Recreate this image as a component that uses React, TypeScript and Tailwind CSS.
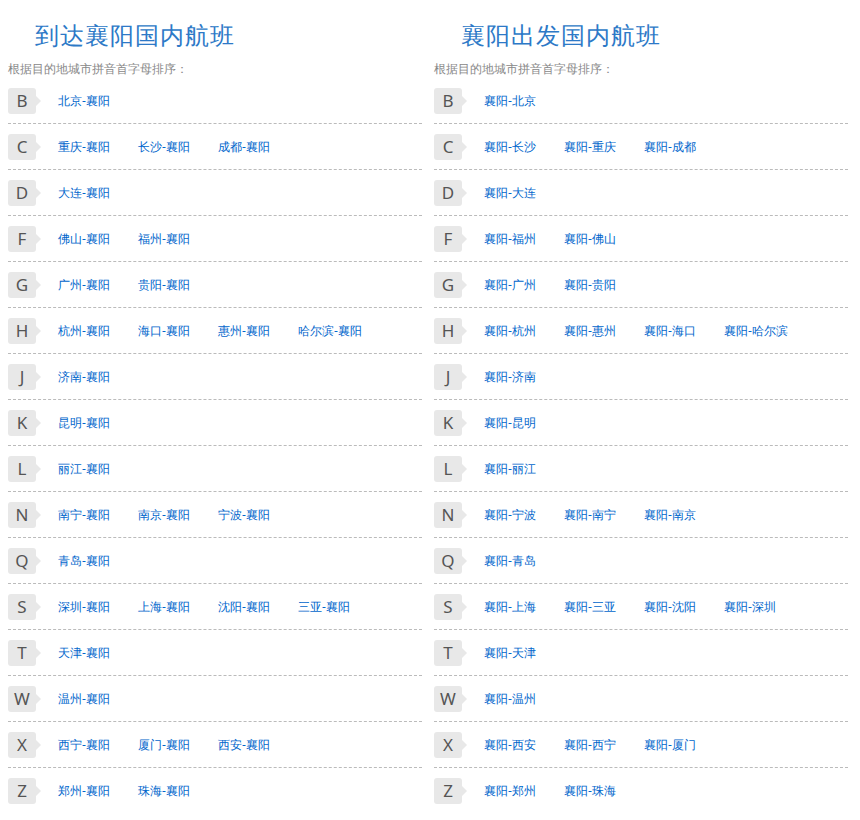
const arrive: [string, string[]][] = [
  ["B", ["北京-襄阳"]],
  ["C", ["重庆-襄阳", "长沙-襄阳", "成都-襄阳"]],
  ["D", ["大连-襄阳"]],
  ["F", ["佛山-襄阳", "福州-襄阳"]],
  ["G", ["广州-襄阳", "贵阳-襄阳"]],
  ["H", ["杭州-襄阳", "海口-襄阳", "惠州-襄阳", "哈尔滨-襄阳"]],
  ["J", ["济南-襄阳"]],
  ["K", ["昆明-襄阳"]],
  ["L", ["丽江-襄阳"]],
  ["N", ["南宁-襄阳", "南京-襄阳", "宁波-襄阳"]],
  ["Q", ["青岛-襄阳"]],
  ["S", ["深圳-襄阳", "上海-襄阳", "沈阳-襄阳", "三亚-襄阳"]],
  ["T", ["天津-襄阳"]],
  ["W", ["温州-襄阳"]],
  ["X", ["西宁-襄阳", "厦门-襄阳", "西安-襄阳"]],
  ["Z", ["郑州-襄阳", "珠海-襄阳"]],
];

const depart: [string, string[]][] = [
  ["B", ["襄阳-北京"]],
  ["C", ["襄阳-长沙", "襄阳-重庆", "襄阳-成都"]],
  ["D", ["襄阳-大连"]],
  ["F", ["襄阳-福州", "襄阳-佛山"]],
  ["G", ["襄阳-广州", "襄阳-贵阳"]],
  ["H", ["襄阳-杭州", "襄阳-惠州", "襄阳-海口", "襄阳-哈尔滨"]],
  ["J", ["襄阳-济南"]],
  ["K", ["襄阳-昆明"]],
  ["L", ["襄阳-丽江"]],
  ["N", ["襄阳-宁波", "襄阳-南宁", "襄阳-南京"]],
  ["Q", ["襄阳-青岛"]],
  ["S", ["襄阳-上海", "襄阳-三亚", "襄阳-沈阳", "襄阳-深圳"]],
  ["T", ["襄阳-天津"]],
  ["W", ["襄阳-温州"]],
  ["X", ["襄阳-西安", "襄阳-西宁", "襄阳-厦门"]],
  ["Z", ["襄阳-郑州", "襄阳-珠海"]],
];

function Badge({ letter }: { letter: string }) {
  return (
    <div className="relative w-[28px] h-[26px] shrink-0">
      <div className="w-full h-full rounded-[3px] bg-[#e8e8e8] flex items-center justify-center text-[17px] text-[#555] font-['Open_Sans',sans-serif]">
        {letter}
      </div>
      <div className="absolute right-[-5px] top-[8px] w-0 h-0 border-y-[5px] border-y-transparent border-l-[5px] border-l-[#e8e8e8]" />
    </div>
  );
}

function Section({ title, data }: { title: string; data: [string, string[]][] }) {
  return (
    <div className="w-[414px]">
      <h2 className="pl-[27px] pt-[17px] h-[62px] text-[24px] leading-[36px] text-[#2d79c7] tracking-[1px]">{title}</h2>
      <div className="text-[12px] text-[#888] leading-[14px]">根据目的地城市拼音首字母排序：</div>
      <div className="mt-[2px]">
        {data.map(([l, items], i) => (
          <div
            key={l}
            className={`flex items-center h-[46px] ${i < data.length - 1 ? "border-b border-dashed border-[#bbb]" : ""}`}
          >
            <Badge letter={l} />
            <div className="flex ml-[22px]">
              {items.map((t) => (
                <a key={t} className="w-[80px] text-[12px] text-[#0066cc]">
                  {t}
                </a>
              ))}
            </div>
          </div>
        ))}
      </div>
    </div>
  );
}

export default function App() {
  return (
    <div className="flex gap-[12px] pl-[8px] bg-white font-['Liberation_Sans','Noto_Sans_CJK_SC',sans-serif]">
      <Section title="到达襄阳国内航班" data={arrive} />
      <Section title="襄阳出发国内航班" data={depart} />
    </div>
  );
}
